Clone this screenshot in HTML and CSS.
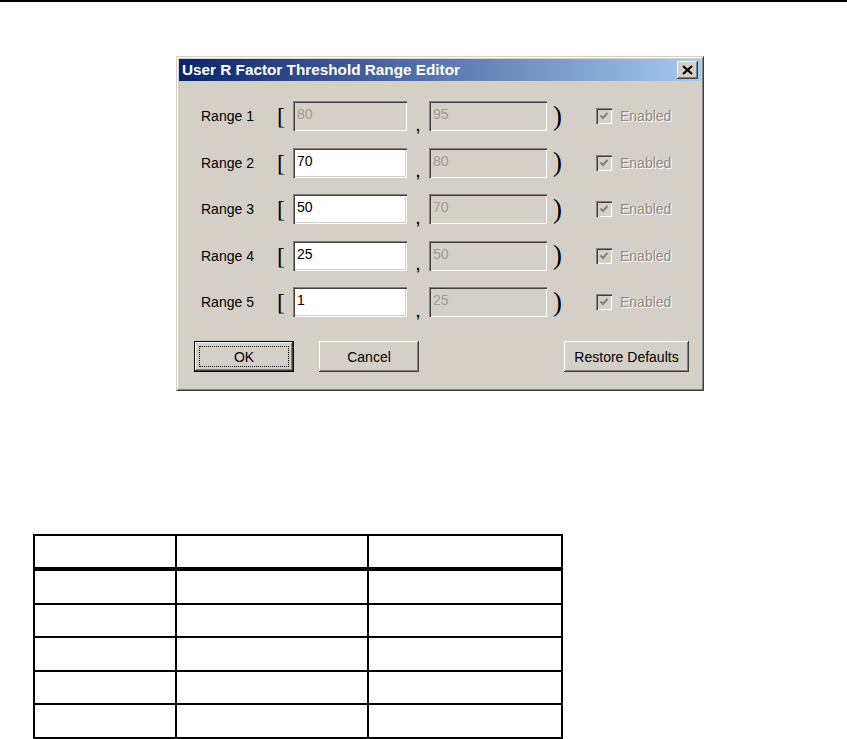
FILE: index.html
```html
<!DOCTYPE html>
<html>
<head>
<meta charset="utf-8">
<link rel="stylesheet" href="styles.css">
</head>
<body>
<div class="topline"></div>
<div class="dialog">
  <div class="frame">
    <div class="titlebar">
      <span class="title">User R Factor Threshold Range Editor</span>
      <span class="close"><svg width="11" height="10" viewBox="0 0 11 10"><path d="M1 1 L10 9 M10 1 L1 9" stroke="#000" stroke-width="2.2" fill="none"/></svg></span>
    </div>
    <div class="body">
      <div class="rows">
        <div class="row">
          <span class="label">Range 1</span><span class="bracket">[</span>
          <span class="field disabled">80</span><span class="comma">,</span>
          <span class="field disabled">95</span><span class="paren">)</span>
          <span class="check"><span class="box"><svg width="10" height="10" viewBox="0 0 10 10"><path d="M1.5 4.5 L4 7 L8.5 1.8" stroke="#808080" stroke-width="2" fill="none"/></svg></span><span class="ctext">Enabled</span></span>
        </div>
        <div class="row">
          <span class="label">Range 2</span><span class="bracket">[</span>
          <span class="field">70</span><span class="comma">,</span>
          <span class="field disabled">80</span><span class="paren">)</span>
          <span class="check"><span class="box"><svg width="10" height="10" viewBox="0 0 10 10"><path d="M1.5 4.5 L4 7 L8.5 1.8" stroke="#808080" stroke-width="2" fill="none"/></svg></span><span class="ctext">Enabled</span></span>
        </div>
        <div class="row">
          <span class="label">Range 3</span><span class="bracket">[</span>
          <span class="field">50</span><span class="comma">,</span>
          <span class="field disabled">70</span><span class="paren">)</span>
          <span class="check"><span class="box"><svg width="10" height="10" viewBox="0 0 10 10"><path d="M1.5 4.5 L4 7 L8.5 1.8" stroke="#808080" stroke-width="2" fill="none"/></svg></span><span class="ctext">Enabled</span></span>
        </div>
        <div class="row">
          <span class="label">Range 4</span><span class="bracket">[</span>
          <span class="field">25</span><span class="comma">,</span>
          <span class="field disabled">50</span><span class="paren">)</span>
          <span class="check"><span class="box"><svg width="10" height="10" viewBox="0 0 10 10"><path d="M1.5 4.5 L4 7 L8.5 1.8" stroke="#808080" stroke-width="2" fill="none"/></svg></span><span class="ctext">Enabled</span></span>
        </div>
        <div class="row">
          <span class="label">Range 5</span><span class="bracket">[</span>
          <span class="field">1</span><span class="comma">,</span>
          <span class="field disabled">25</span><span class="paren">)</span>
          <span class="check"><span class="box"><svg width="10" height="10" viewBox="0 0 10 10"><path d="M1.5 4.5 L4 7 L8.5 1.8" stroke="#808080" stroke-width="2" fill="none"/></svg></span><span class="ctext">Enabled</span></span>
        </div>
      </div>
      <div class="buttons">
        <span class="btn default"><span class="focus">OK</span></span>
        <span class="btn">Cancel</span>
        <span class="btn restore">Restore Defaults</span>
      </div>
    </div>
  </div>
</div>
<table class="grid">
  <colgroup><col class="c1"><col class="c2"><col class="c3"></colgroup>
  <thead><tr><td></td><td></td><td></td></tr></thead>
  <tbody>
    <tr><td></td><td></td><td></td></tr>
    <tr><td></td><td></td><td></td></tr>
    <tr><td></td><td></td><td></td></tr>
    <tr><td></td><td></td><td></td></tr>
    <tr><td></td><td></td><td></td></tr>
  </tbody>
</table>
</body>
</html>
```

FILE: styles.css
```css
html, body {
  margin: 0;
  padding: 0;
  background: #fff;
}
body {
  font-family: "Liberation Sans", Arial, sans-serif;
  font-size: 14px;
  color: #000;
}
.topline {
  height: 2px;
  background: #000;
}
.dialog {
  margin: 54px 0 0 176px;
  width: 528px;
  box-sizing: border-box;
  border: 1px solid;
  border-color: #d4d0c8 #404040 #404040 #d4d0c8;
}
.frame {
  border: 1px solid;
  border-color: #fff #808080 #808080 #fff;
  padding: 1px;
  background: #d4d0c8;
}
.titlebar {
  height: 22px;
  display: flex;
  align-items: center;
  justify-content: space-between;
  padding: 0 3px;
  background: linear-gradient(to right, #0a246a, #a6caf0);
}
.title {
  color: #fff;
  font-weight: bold;
  font-size: 15.3px;
}
.close {
  width: 21px;
  height: 18px;
  box-sizing: border-box;
  background: #d4d0c8;
  display: flex;
  align-items: center;
  justify-content: center;
  box-shadow: inset -1px -1px #404040, inset 1px 1px #fff, inset -2px -2px #808080;
}
.body {
  padding: 12px 12px 16px 15px;
}
.rows {
  padding-left: 7px;
}
.row {
  height: 46.5px;
  display: grid;
  grid-template-columns: 75px 17px 114px 22px 118px 49px auto;
  align-items: center;
}
.label {
  color: #000;
}
.bracket {
  font-family: "Liberation Serif", serif;
  font-size: 24px;
  line-height: 1;
  padding-left: 1px;
}
.paren {
  font-family: "Liberation Serif", serif;
  font-size: 27px;
  line-height: 1;
  padding-left: 6px;
}
.comma {
  align-self: end;
  padding: 0 0 7px 9px;
  font-weight: bold;
  line-height: 1;
}
.field {
  height: 30px;
  box-sizing: border-box;
  background: #fff;
  padding: 4px 4px;
  box-shadow: inset 1px 1px #808080, inset 2px 2px #404040, inset -1px -1px #fff, inset -2px -2px #d4d0c8;
  line-height: 18px;
}
.field.disabled {
  background: #d4d0c8;
  color: #a09c94;
}
.check {
  display: flex;
  align-items: center;
  gap: 8px;
}
.box {
  width: 16px;
  height: 16px;
  box-sizing: border-box;
  background: #d4d0c8;
  display: flex;
  align-items: center;
  justify-content: center;
  box-shadow: inset 1px 1px #808080, inset 2px 2px #404040, inset -1px -1px #fff, inset -2px -2px #d4d0c8;
}
.ctext {
  color: #8e8b85;
  text-shadow: 1px 1px 0 #fff;
}
.buttons {
  margin-top: 15.5px;
  display: flex;
  gap: 25px;
}
.btn {
  width: 100px;
  height: 31px;
  box-sizing: border-box;
  display: flex;
  align-items: center;
  justify-content: center;
  background: #d4d0c8;
  box-shadow: inset -1px -1px #404040, inset 1px 1px #fff, inset -2px -2px #808080, inset 2px 2px #d4d0c8;
}
.btn.default {
  border: 1px solid #000;
  padding: 4px;
}
.focus {
  flex: 1;
  align-self: stretch;
  display: flex;
  align-items: center;
  justify-content: center;
  border: 1px dotted #000;
}
.btn.restore {
  width: 125px;
  margin-left: auto;
}
.grid {
  margin: 143px 0 0 33px;
  border-collapse: collapse;
  table-layout: fixed;
  width: 528px;
}
.c1 { width: 142px; }
.c2 { width: 192px; }
.c3 { width: 194px; }
.grid td {
  border: 2px solid #000;
  height: 31.5px;
  padding: 0;
}
.grid thead td {
  border-bottom: 4px solid #000;
  height: 31px;
}
```
